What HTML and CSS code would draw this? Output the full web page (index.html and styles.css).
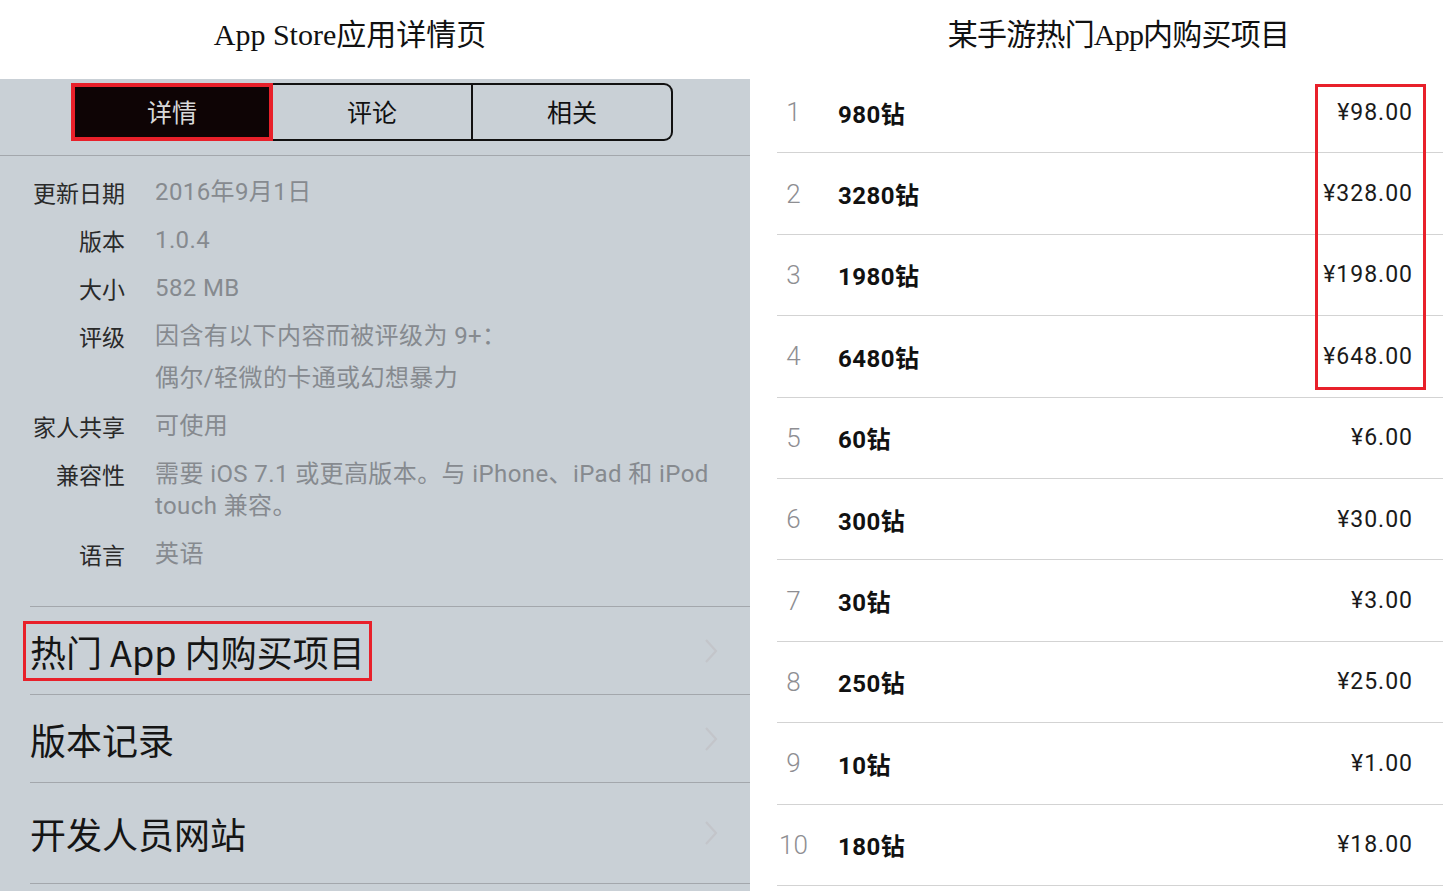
FILE: index.html
```html
<!DOCTYPE html>
<html lang="zh-CN">
<head>
  <meta charset="UTF-8" />
  <title>App Store应用详情页</title>
  <link rel="stylesheet" href="styles.css">
</head>
<body>
  <div id="page">
    <div class="col-left">
      <div class="head head-left">
        <h1 class="title">App Store应用详情页</h1>
      </div>
      <div class="panel">
        <div class="segments">
          <div class="seg seg-active">详情</div>
          <div class="seg">评论</div>
          <div class="seg seg-last">相关</div>
        </div>
        <div class="rule"></div>

        <div class="details">
          <div class="label">更新日期</div>
          <div class="value">2016年9月1日</div>

          <div class="label">版本</div>
          <div class="value">1.0.4</div>

          <div class="label">大小</div>
          <div class="value">582 MB</div>

          <div class="label">评级</div>
          <div class="value">
            因含有以下内容而被评级为 9+：
            <div class="value-extra">偶尔/轻微的卡通或幻想暴力</div>
          </div>

          <div class="label">家人共享</div>
          <div class="value">可使用</div>

          <div class="label">兼容性</div>
          <div class="value">需要 iOS 7.1 或更高版本。与 iPhone、iPad 和 iPod<br>touch 兼容。</div>

          <div class="label">语言</div>
          <div class="value">英语</div>
        </div>

        <div class="links">
          <div class="link-row">
            <span class="link-text marked">热门 App 内购买项目</span>
            <svg class="chevron" width="14" height="26" viewBox="0 0 14 26"><polyline points="2,2 12,13 2,24" fill="none" stroke="#c3c5ca" stroke-width="2.2"/></svg>
          </div>
          <div class="link-row">
            <span class="link-text">版本记录</span>
            <svg class="chevron" width="14" height="26" viewBox="0 0 14 26"><polyline points="2,2 12,13 2,24" fill="none" stroke="#c3c5ca" stroke-width="2.2"/></svg>
          </div>
          <div class="link-row link-tall">
            <span class="link-text">开发人员网站</span>
            <svg class="chevron" width="14" height="26" viewBox="0 0 14 26"><polyline points="2,2 12,13 2,24" fill="none" stroke="#c3c5ca" stroke-width="2.2"/></svg>
          </div>
        </div>
      </div>
    </div>

    <div class="col-right">
      <div class="head head-right">
        <h1 class="title">某手游热门App内购买项目</h1>
      </div>
      <div class="iap-list">
        <div class="iap"><span class="num">1</span><span class="name">980钻</span><span class="price">¥98.00</span></div>
        <div class="iap"><span class="num">2</span><span class="name">3280钻</span><span class="price">¥328.00</span></div>
        <div class="iap"><span class="num">3</span><span class="name">1980钻</span><span class="price">¥198.00</span></div>
        <div class="iap"><span class="num">4</span><span class="name">6480钻</span><span class="price">¥648.00</span></div>
        <div class="iap"><span class="num">5</span><span class="name">60钻</span><span class="price">¥6.00</span></div>
        <div class="iap"><span class="num">6</span><span class="name">300钻</span><span class="price">¥30.00</span></div>
        <div class="iap"><span class="num">7</span><span class="name">30钻</span><span class="price">¥3.00</span></div>
        <div class="iap"><span class="num">8</span><span class="name">250钻</span><span class="price">¥25.00</span></div>
        <div class="iap"><span class="num">9</span><span class="name">10钻</span><span class="price">¥1.00</span></div>
        <div class="iap"><span class="num">10</span><span class="name">180钻</span><span class="price">¥18.00</span></div>
      </div>
      <div class="price-mark"></div>
    </div>
  </div>
</body>
</html>
```

FILE: styles.css
```css
body {
  margin: 0;
  padding: 0;
  background-color: #fff;
  font-family: "Roboto", "Noto Sans CJK SC", sans-serif;
  color: #1a1a1a;
}

#page {
  display: flex;
  width: 1443px;
  height: 891px;
  overflow: hidden;
}

/* titles */
.head {
  display: flex;
  justify-content: center;
}

.head-left {
  height: 79px;
  padding-right: 50px;
}

.head-right {
  height: 72px;
  padding-left: 44px;
}

.title {
  margin: 0;
  font-family: "Liberation Serif", "Noto Sans CJK SC", serif;
  font-size: 30px;
  font-weight: normal;
  line-height: 70px;
  color: #111;
}

.head-right .title {
  letter-spacing: -0.8px;
}

/* left column */
.col-left {
  width: 750px;
  flex: none;
  display: flex;
  flex-direction: column;
}

.panel {
  flex: 1;
  background-color: #c9d0d6;
  padding-top: 4px;
}

.segments {
  display: flex;
  margin-left: 71px;
  width: 602px;
  height: 58px;
}

.seg {
  flex: 1;
  display: flex;
  align-items: center;
  justify-content: center;
  padding-bottom: 3px;
  font-family: "Noto Sans CJK SC", sans-serif;
  font-size: 25px;
  color: #111;
  border: 2px solid #111;
  border-left: none;
}

.seg-active {
  background-color: #0e0405;
  color: #d9d9d9;
  border: 4px solid #e8202a;
  flex: none;
  width: 194px;
}

.seg-last {
  border-radius: 0 9px 9px 0;
}

.rule {
  height: 1px;
  background-color: #a3a7ac;
  margin-top: 14px;
}

.details {
  display: grid;
  grid-template-columns: 125px 1fr;
  column-gap: 30px;
  row-gap: 16px;
  padding-top: 20px;
  font-size: 23px;
  line-height: 32px;
}

.label {
  text-align: right;
  color: #2a2a2a;
  font-family: "Noto Sans CJK SC", sans-serif;
}

.value {
  color: #868a8f;
  font-size: 24px;
  letter-spacing: 0.4px;
}

.value-extra {
  margin-top: 10px;
}

.links {
  margin-top: 36px;
  margin-left: 30px;
  border-top: 1px solid #a3a7ac;
}

.link-row {
  display: flex;
  align-items: center;
  justify-content: space-between;
  height: 87px;
  padding-right: 32px;
  border-bottom: 1px solid #a3a7ac;
}

.link-tall {
  height: 100px;
}

.link-text {
  font-family: "Noto Sans CJK SC", sans-serif;
  font-size: 36px;
  color: #151515;
}

.marked {
  border: 3px solid #e8202a;
  padding: 0 4px;
  margin-left: -7px;
  line-height: 54px;
}

/* right column */
.col-right {
  flex: 1;
  position: relative;
}

.iap-list {
  padding-left: 27px;
}

.iap {
  display: flex;
  align-items: center;
  height: 80.4px;
  border-bottom: 1px solid #d3d3d3;
  padding-right: 30px;
}

.num {
  width: 33px;
  margin-right: 28px;
  text-align: center;
  color: #8e8e92;
  font-size: 26px;
  font-weight: 300;
}

.name {
  flex: 1;
  font-size: 24px;
  font-weight: bold;
  letter-spacing: 0.5px;
  color: #111;
}

.price {
  font-size: 23px;
  letter-spacing: 1px;
  color: #1a1a1a;
}

.price-mark {
  position: absolute;
  left: 565px;
  top: 84px;
  width: 105px;
  height: 300px;
  border: 3px solid #e8202a;
}
```
